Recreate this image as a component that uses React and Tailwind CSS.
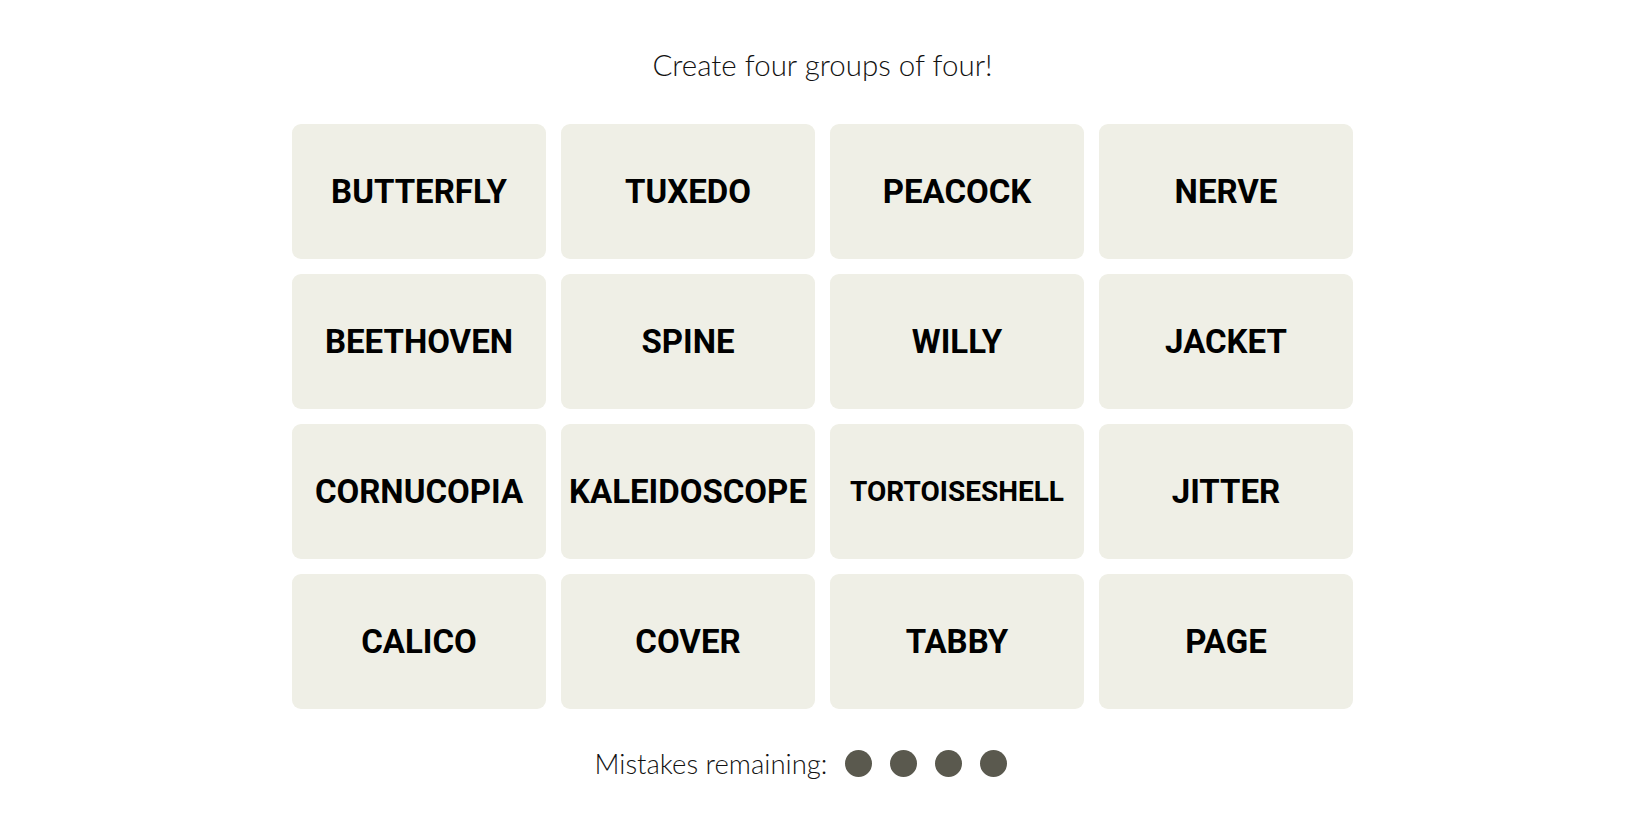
import React from 'react';

const words = [
  'BUTTERFLY', 'TUXEDO', 'PEACOCK', 'NERVE',
  'BEETHOVEN', 'SPINE', 'WILLY', 'JACKET',
  'CORNUCOPIA', 'KALEIDOSCOPE', 'TORTOISESHELL', 'JITTER',
  'CALICO', 'COVER', 'TABBY', 'PAGE'
];

export default function App() {
  return <div className="min-h-screen bg-white flex flex-col items-center pr-[5px]">
      {/* heading */}
      <p className="mt-[45px] text-[29.5px] leading-[40px] font-light text-[#121212]" style={{
      fontFamily: 'Lato, "Liberation Sans", sans-serif'
    }}>
        Create four groups of four!
      </p>

      {/* tiles */}
      <div className="mt-[39px] w-[1061px] grid grid-cols-4 gap-[15px]">
        {words.map(w => <button key={w} className="h-[135px] rounded-[9px] bg-[#efefe6] flex items-center justify-center text-black font-bold uppercase whitespace-nowrap" style={{
        fontFamily: 'Roboto, "Liberation Sans", sans-serif'
      }}>
            <span className={w === 'TORTOISESHELL' ? 'text-[28px]' : 'text-[33px]'}>{w}</span>
          </button>)}
      </div>

      {/* mistakes */}
      <div className="mt-[34px] mr-[43px] flex items-center gap-[18px]">
        <span className="text-[27.5px] font-light text-[#121212]" style={{
        fontFamily: 'Lato, "Liberation Sans", sans-serif'
      }}>Mistakes remaining:</span>
        <div className="flex items-center gap-[18px]">
          {[0, 1, 2, 3].map(i => <span key={i} className="w-[27px] h-[27px] rounded-full bg-[#5a594e]" />)}
        </div>
      </div>
    </div>;
}
